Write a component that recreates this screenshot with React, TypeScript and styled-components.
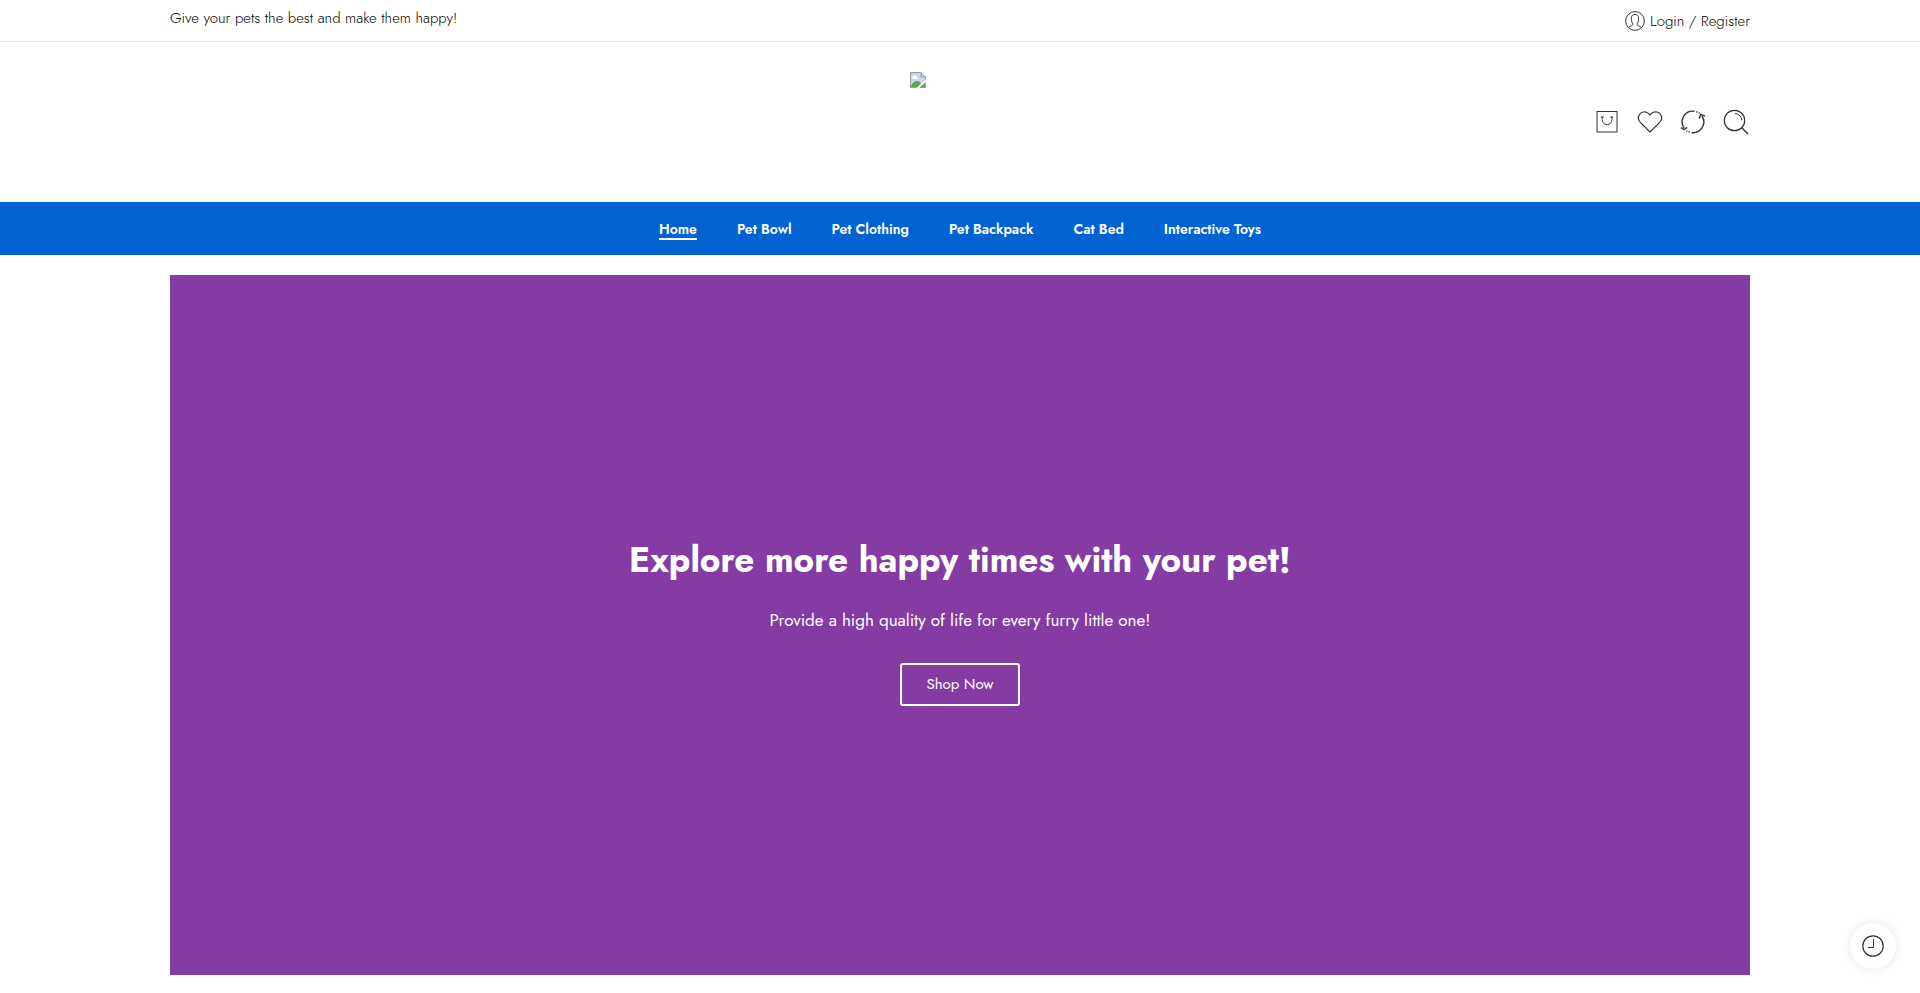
import React from "react";
import styled, { createGlobalStyle } from "styled-components";

const ink = "#333333";

const GlobalStyle = createGlobalStyle`
  *, *::before, *::after { box-sizing: border-box; }
  body {
    margin: 0;
    background: #ffffff;
    color: ${ink};
    font-family: Jost, Lato, "Open Sans", sans-serif;
    font-size: 15px;
    line-height: 20px;
  }
  a { color: inherit; text-decoration: none; }
  h1, p { margin: 0; }
`;

const Container = styled.div`
  width: min(100% - 32px, 1580px);
  margin: 0 auto;
`;

const TopBar = styled.div`
  border-bottom: 1px solid #e7e7e7;
  color: #000000;
  font-weight: 300;
`;

const TopBarInner = styled(Container)`
  display: flex;
  justify-content: space-between;
  align-items: flex-start;
  padding: 8px 0 7px;
`;

const AccountLink = styled.a`
  display: flex;
  align-items: center;
  gap: 5px;
  height: 26px;
`;

const HeaderInner = styled(Container)`
  display: grid;
  grid-template-columns: 1fr auto 1fr;
  align-items: center;
  padding: 30px 0;
`;

const LogoLink = styled.a`
  grid-column: 2;
  width: 100px;
  height: 100px;
`;

const Tools = styled.div`
  display: flex;
  justify-content: flex-end;
  gap: 17px;
  padding-right: 1px;
`;

const IconButton = styled.button`
  display: flex;
  padding: 0;
  border: 0;
  background: none;
  cursor: pointer;
`;

const LineIcon = styled.svg`
  display: block;
  color: ${ink};
  fill: none;
  stroke: currentColor;
  stroke-width: 1;
`;

const Nav = styled.nav`
  display: flex;
  flex-wrap: wrap;
  justify-content: center;
  gap: 0 40px;
  padding: 15px 16px;
  background: #0063d1;
  color: #ffffff;
`;

const NavLink = styled.a<{ $active?: boolean }>`
  height: 23px;
  padding-top: 2px;
  border-bottom: 2px solid ${(p) => (p.$active ? "#ffffff" : "transparent")};
  font-size: 14px;
  font-weight: 600;
`;

const Hero = styled(Container)`
  display: flex;
  flex-direction: column;
  align-items: center;
  justify-content: center;
  min-height: 700px;
  margin-top: 20px;
  margin-bottom: 18px;
  padding: 0 16px 9px;
  background: #843ba3;
  color: #ffffff;
  text-align: center;
`;

const HeroTitle = styled.h1`
  font-size: 35px;
  line-height: 48px;
  font-weight: 700;
`;

const HeroText = styled.p`
  margin-top: 24px;
  font-size: 17px;
  line-height: 24px;
`;

const ShopButton = styled.button`
  width: 120px;
  height: 43px;
  margin-top: 31px;
  border: 2px solid #ffffff;
  border-radius: 3px;
  background: transparent;
  color: #ffffff;
  font: inherit;
  cursor: pointer;
`;

const RecentButton = styled(IconButton)`
  position: fixed;
  right: 24px;
  bottom: 24px;
  width: 46px;
  height: 46px;
  align-items: center;
  justify-content: center;
  border-radius: 50%;
  background: #ffffff;
  box-shadow: 0 0 10px rgba(0, 0, 0, 0.1);
`;

const PlaceholderIcon = styled.svg`
  display: block;
`;

const navItems = ["Home", "Pet Bowl", "Pet Clothing", "Pet Backpack", "Cat Bed", "Interactive Toys"];

const UserIcon = () => (
  <LineIcon width="20" height="20" viewBox="0 0 20 20" aria-hidden="true">
    <circle cx="10" cy="10" r="9.4" />
    <path d="M3.6 16.6c.8-1.2 2.6-1.4 3.6-2 .9-.6.7-1.7.1-2.7C6.5 10.5 6.2 9 6.3 7.3 6.4 4.8 7.9 3.4 10 3.4s3.6 1.4 3.7 3.9c.1 1.7-.2 3.2-1 4.6-.6 1-.8 2.1.1 2.7 1 .6 2.8.8 3.6 2" />
  </LineIcon>
);

const BagIcon = () => (
  <LineIcon width="26" height="26" viewBox="0 0 26 26" aria-hidden="true">
    <rect x="3" y="2.5" width="20" height="20.5" />
    <path d="M6.8 8h3M16.2 8h3M8.2 8v2.5a4.9 5.2 0 0 0 9.800 0V8" />
  </LineIcon>
);

const HeartIcon = () => (
  <LineIcon width="26" height="26" viewBox="0 0 26 26" aria-hidden="true">
    <path d="M13 23 3.3 13.3C1.3 11.3.9 8.8 1.9 6.6 3.6 2.6 8.5 1.8 11.4 4.4L13 6l1.6-1.6c2.9-2.6 7.8-1.8 9.5 2.2 1 2.2.6 4.7-1.4 6.7z" strokeWidth="1.2" />
  </LineIcon>
);

const CompareIcon = () => (
  <LineIcon width="26" height="26" viewBox="0 0 26 26" aria-hidden="true">
    <g strokeWidth="1.4">
      <path d="M14.5 2.3A10.7 10.7 0 0 0 4.1 19" />
      <path d="M11.5 23.6A10.7 10.7 0 0 0 21.9 7" />
      <path d="M1 18.7l3.1 2 3-2.3M19.2 9.8l1.5-4.4 4.4 1.8" />
      <path d="M16.2 2.8l1.4.4M18.7 3.7l.9.5M9.8 23.2l-1.4-.4M7.3 22.3l-.9-.5" />
    </g>
  </LineIcon>
);

const SearchIcon = () => (
  <LineIcon width="26" height="26" viewBox="0 0 26 26" aria-hidden="true">
    <circle cx="11.5" cy="11.5" r="10.2" strokeWidth="1.2" />
    <path d="M12 4.5a7.5 7.5 0 0 1 7 7" />
    <path d="M18.8 18.8 25 25" strokeWidth="1.4" />
  </LineIcon>
);

const ClockIcon = () => (
  <LineIcon width="22" height="22" viewBox="0 0 22 22" aria-hidden="true">
    <circle cx="11" cy="11" r="10.2" strokeWidth="1.2" />
    <path d="M11.5 4v8.500H6" />
  </LineIcon>
);

const LogoPlaceholder = () => (
  <PlaceholderIcon width="16" height="16" viewBox="0 0 16 16" role="img" aria-label="Store logo">
    <path d="M.5 .5h10.5l4.5 4.5v3L7 15.5H.5z" fill="#c3d7f5" />
    <path d="M2.5 7a2 2 0 0 1 1-3 2 2 0 0 1 3.5 1A1.5 1.5 0 0 1 8 7z" fill="#ffffff" />
    <path d="M1 14c2-4 4-5 6-5s3 1 4 2.5L7 15.5H1z" fill="#55aa45" />
    <path d="M15.5 10.5v5H9.5z" fill="#55aa45" />
    <path d="M6.5 15.5H.5V.5h10.5l4.5 4.5v2.5M11 .5V5h4.5M15.5 10.5v5h-5.5" fill="none" stroke="#9a9a9a" />
  </PlaceholderIcon>
);

export default function App() {
  return (
    <>
      <GlobalStyle />
      <header>
        <TopBar>
          <TopBarInner>
            <span>Give your pets the best and make them happy!</span>
            <AccountLink href="#account">
              <UserIcon />
              Login / Register
            </AccountLink>
          </TopBarInner>
        </TopBar>
        <HeaderInner>
          <LogoLink href="#home">
            <LogoPlaceholder />
          </LogoLink>
          <Tools>
            <IconButton aria-label="Cart"><BagIcon /></IconButton>
            <IconButton aria-label="Wishlist"><HeartIcon /></IconButton>
            <IconButton aria-label="Compare"><CompareIcon /></IconButton>
            <IconButton aria-label="Search"><SearchIcon /></IconButton>
          </Tools>
        </HeaderInner>
        <Nav>
          {navItems.map((item, i) => (
            <NavLink key={item} href="#shop" $active={i === 0}>{item}</NavLink>
          ))}
        </Nav>
      </header>
      <main>
        <Hero>
          <HeroTitle>Explore more happy times with your pet!</HeroTitle>
          <HeroText>Provide a high quality of life for every furry little one!</HeroText>
          <ShopButton>Shop Now</ShopButton>
        </Hero>
      </main>
      <RecentButton aria-label="Recently viewed"><ClockIcon /></RecentButton>
    </>
  );
}
